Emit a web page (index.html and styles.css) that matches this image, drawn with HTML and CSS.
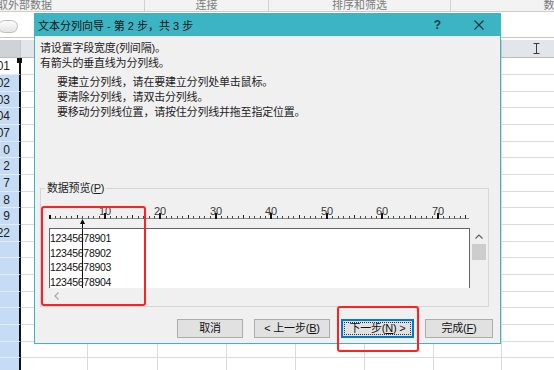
FILE: index.html
```html
<!DOCTYPE html>
<html lang="zh-CN">
<head>
<meta charset="utf-8">
<title>文本分列向导</title>
<link rel="stylesheet" href="styles.css">
</head>
<body>
<div class="app">
  <div class="ribbon-groups">
    <div class="rg rg-1">获取外部数据</div>
    <div class="rg rg-2">连接</div>
    <div class="rg rg-3">排序和筛选</div>
    <div class="rg rg-4">数据工具</div>
  </div>
  <div class="formula-bar"><span class="namebox"></span></div>
  <div class="sheet">
    <div class="row head">
      <span class="c"></span><span class="c"></span><span class="c"></span><span class="c"></span><span class="c"></span><span class="c"></span><span class="c"></span><span class="c"></span><span class="c ibeam-cell"><svg class="ibeam" width="7" height="11" viewBox="0 0 7 11"><path d="M0.5 0.5h6M3.5 0.5v10M0.5 10.5h6" stroke="#3a3a3a" fill="none"/></svg></span>
    </div>
    <div class="rows">
      <div class="row"><span class="c a active">01</span><span class="c"></span><span class="c"></span><span class="c"></span><span class="c"></span><span class="c"></span><span class="c"></span><span class="c"></span><span class="c"></span></div>
      <div class="row"><span class="c a">02</span><span class="c"></span><span class="c"></span><span class="c"></span><span class="c"></span><span class="c"></span><span class="c"></span><span class="c"></span><span class="c"></span></div>
      <div class="row"><span class="c a">03</span><span class="c"></span><span class="c"></span><span class="c"></span><span class="c"></span><span class="c"></span><span class="c"></span><span class="c"></span><span class="c"></span></div>
      <div class="row"><span class="c a">04</span><span class="c"></span><span class="c"></span><span class="c"></span><span class="c"></span><span class="c"></span><span class="c"></span><span class="c"></span><span class="c"></span></div>
      <div class="row"><span class="c a">07</span><span class="c"></span><span class="c"></span><span class="c"></span><span class="c"></span><span class="c"></span><span class="c"></span><span class="c"></span><span class="c"></span></div>
      <div class="row"><span class="c a">0</span><span class="c"></span><span class="c"></span><span class="c"></span><span class="c"></span><span class="c"></span><span class="c"></span><span class="c"></span><span class="c"></span></div>
      <div class="row"><span class="c a">2</span><span class="c"></span><span class="c"></span><span class="c"></span><span class="c"></span><span class="c"></span><span class="c"></span><span class="c"></span><span class="c"></span></div>
      <div class="row"><span class="c a">7</span><span class="c"></span><span class="c"></span><span class="c"></span><span class="c"></span><span class="c"></span><span class="c"></span><span class="c"></span><span class="c"></span></div>
      <div class="row"><span class="c a">8</span><span class="c"></span><span class="c"></span><span class="c"></span><span class="c"></span><span class="c"></span><span class="c"></span><span class="c"></span><span class="c"></span></div>
      <div class="row"><span class="c a">9</span><span class="c"></span><span class="c"></span><span class="c"></span><span class="c"></span><span class="c"></span><span class="c"></span><span class="c"></span><span class="c"></span></div>
      <div class="row"><span class="c a">22</span><span class="c"></span><span class="c"></span><span class="c"></span><span class="c"></span><span class="c"></span><span class="c"></span><span class="c"></span><span class="c"></span></div>
      <div class="row"><span class="c a"></span><span class="c"></span><span class="c"></span><span class="c"></span><span class="c"></span><span class="c"></span><span class="c"></span><span class="c"></span><span class="c"></span></div>
      <div class="row"><span class="c a"></span><span class="c"></span><span class="c"></span><span class="c"></span><span class="c"></span><span class="c"></span><span class="c"></span><span class="c"></span><span class="c"></span></div>
      <div class="row"><span class="c a"></span><span class="c"></span><span class="c"></span><span class="c"></span><span class="c"></span><span class="c"></span><span class="c"></span><span class="c"></span><span class="c"></span></div>
      <div class="row"><span class="c a"></span><span class="c"></span><span class="c"></span><span class="c"></span><span class="c"></span><span class="c"></span><span class="c"></span><span class="c"></span><span class="c"></span></div>
      <div class="row"><span class="c a"></span><span class="c"></span><span class="c"></span><span class="c"></span><span class="c"></span><span class="c"></span><span class="c"></span><span class="c"></span><span class="c"></span></div>
      <div class="row"><span class="c a"></span><span class="c"></span><span class="c"></span><span class="c"></span><span class="c"></span><span class="c"></span><span class="c"></span><span class="c"></span><span class="c"></span></div>
      <div class="row"><span class="c a"></span><span class="c"></span><span class="c"></span><span class="c"></span><span class="c"></span><span class="c"></span><span class="c"></span><span class="c"></span><span class="c"></span></div>
      <div class="row"><span class="c a"></span><span class="c"></span><span class="c"></span><span class="c"></span><span class="c"></span><span class="c"></span><span class="c"></span><span class="c"></span><span class="c"></span></div>
    </div>
  </div>

  <div class="dialog">
    <div class="titlebar">
      <span class="title">文本分列向导 - 第 2 步，共 3 步</span>
      <span class="help">?</span>
      <svg class="close" width="10" height="10" viewBox="0 0 10 10"><path d="M0.5 0.5L9.5 9.5M9.5 0.5L0.5 9.5" stroke="#1b3a40" stroke-width="1.2" fill="none"/></svg>
    </div>
    <div class="dlg-body">
      <p class="intro">请设置字段宽度(列间隔)。<br>有箭头的垂直线为分列线。</p>
      <p class="hints">要建立分列线，请在要建立分列处单击鼠标。<br>要清除分列线，请双击分列线。<br>要移动分列线位置，请按住分列线并拖至指定位置。</p>
      <div class="group">
        <div class="group-label">数据预览(<u>P</u>)</div>
        <div class="preview">
          <svg class="ruler" width="421" height="28" viewBox="0 0 421 28">
            <path d="M0 18.5H420" stroke="#8a8a8a" fill="none"/>
            <path d="M6.5 16v2.5M11.5 16v2.5M17.5 16v2.5M22.5 16v2.5M33.5 16v2.5M39.5 16v2.5M44.5 16v2.5M50.5 16v2.5M61.5 16v2.5M67.5 16v2.5M72.5 16v2.5M78.5 16v2.5M89.5 16v2.5M94.5 16v2.5M100.5 16v2.5M105.5 16v2.5M117.5 16v2.5M122.5 16v2.5M128.5 16v2.5M133.5 16v2.5M144.5 16v2.5M150.5 16v2.5M155.5 16v2.5M161.5 16v2.5M172.5 16v2.5M178.5 16v2.5M183.5 16v2.5M189.5 16v2.5M200.5 16v2.5M205.5 16v2.5M211.5 16v2.5M216.5 16v2.5M228.5 16v2.5M233.5 16v2.5M239.5 16v2.5M244.5 16v2.5M255.5 16v2.5M261.5 16v2.5M266.5 16v2.5M272.5 16v2.5M283.5 16v2.5M289.5 16v2.5M294.5 16v2.5M300.5 16v2.5M311.5 16v2.5M316.5 16v2.5M322.5 16v2.5M327.5 16v2.5M339.5 16v2.5M344.5 16v2.5M350.5 16v2.5M355.5 16v2.5M366.5 16v2.5M372.5 16v2.5M377.5 16v2.5M383.5 16v2.5M394.5 16v2.5M400.5 16v2.5M405.5 16v2.5M411.5 16v2.5" stroke="#444" fill="none"/>
            <path d="M28.5 15v3.5M83.5 15v3.5M139.5 15v3.5M194.5 15v3.5M250.5 15v3.5M305.5 15v3.5M361.5 15v3.5M416.5 15v3.5" stroke="#222" fill="none"/>
            <g fill="#111">
              <rect x="0" y="15" width="2" height="4"/>
              <rect x="55" y="13" width="2" height="6"/>
              <rect x="110" y="13" width="2" height="6"/>
              <rect x="166" y="13" width="2" height="6"/>
              <rect x="221" y="13" width="2" height="6"/>
              <rect x="277" y="13" width="2" height="6"/>
              <rect x="332" y="13" width="2" height="6"/>
              <rect x="388" y="13" width="2" height="6"/>
            </g>
            <text x="56" y="15">10</text>
            <text x="111" y="15">20</text>
            <text x="167" y="15">30</text>
            <text x="222" y="15">40</text>
            <text x="278" y="15">50</text>
            <text x="333" y="15">60</text>
            <text x="389" y="15">70</text>
            <path d="M33.5 19L31 24H36Z" fill="#000"/>
            <path d="M33.5 24V28" stroke="#000" fill="none"/>
          </svg>
          <div class="data">
            <span class="split"></span>
            <div>12345678901</div>
            <div>12345678902</div>
            <div>12345678903</div>
            <div>12345678904</div>
          </div>
          <div class="vscroll">
            <svg width="8" height="5" viewBox="0 0 8 5"><path d="M0.5 4.5L4 1L7.5 4.5" stroke="#606060" stroke-width="1.2" fill="none"/></svg>
            <span class="thumb"></span>
          </div>
          <div class="hscroll">
            <svg width="5" height="8" viewBox="0 0 5 8"><path d="M4.5 0.5L1 4L4.5 7.5" stroke="#a8a8a8" stroke-width="1.2" fill="none"/></svg>
          </div>
        </div>
      </div>
      <div class="buttons">
        <span class="btn btn-cancel">取消</span>
        <span class="btn btn-back">&lt; 上一步(<u>B</u>)</span>
        <span class="btn btn-next"><span class="focus">下一步(<u>N</u>) &gt;</span></span>
        <span class="btn btn-finish">完成(<u>F</u>)</span>
      </div>
    </div>
  </div>

  <div class="mark mark-preview"></div>
  <div class="mark mark-next"></div>
</div>
</body>
</html>
```

FILE: styles.css
```css
* { box-sizing: border-box; }
html, body { margin: 0; padding: 0; }
body {
  width: 554px;
  height: 370px;
  overflow: hidden;
  background: #fff;
  font-family: "Liberation Sans", "Noto Sans CJK SC", sans-serif;
  color: #1e1e1e;
}
.app { position: relative; width: 554px; height: 370px; overflow: hidden; }

/* ribbon group labels */
.ribbon-groups {
  display: flex;
  height: 12px;
  margin-left: -106px;
  background: #f3f3f3;
  border-bottom: 1px solid #cdcdcd;
}
.rg {
  flex: none;
  height: 11px;
  line-height: 10px;
  font-size: 11px;
  color: #7b7b7b;
  text-align: center;
  white-space: nowrap;
  overflow: hidden;
  border-right: 1px solid #d2d2d2;
}
.rg-1 { width: 251px; }
.rg-2 { width: 124px; }
.rg-3 { width: 182px; }
.rg-4 { width: 230px; }

/* formula bar */
.formula-bar {
  height: 26px;
  border-bottom: 1px solid #c6c6c6;
  padding-top: 8px;
}
.namebox {
  display: block;
  width: 20px;
  height: 13px;
  margin-left: -2px;
  border: 1px solid #bdbdbd;
  border-radius: 7px;
  background: linear-gradient(#fbfbfb, #e4e4e4);
}

/* sheet grid */
.sheet { padding-top: 2px; }
.row { display: flex; height: 17px; }
.rows .row:nth-child(3n) { height: 16px; }
.c {
  flex: none;
  width: 69px;
  height: 100%;
  border-right: 1px solid #dadada;
  border-bottom: 1px solid #dadada;
}
.row > .c:nth-child(1) { width: 21px; }
.row > .c:nth-child(2) { width: 67px; }
.row > .c:nth-child(3) { width: 70px; }
.row > .c:nth-child(8) { width: 68px; }

.head { height: 18px; }
.head .c {
  background: #e2e5e9;
  border-right-color: #c4c6c9;
  border-bottom-color: #b9bbbe;
}
.head .c:first-child { background: #cfd2d6; }
.ibeam-cell { display: flex; align-items: center; padding-left: 31px; }
.ibeam { display: block; }

.a {
  display: flex;
  justify-content: flex-end;
  align-items: center;
  padding-right: 9px;
  background: #c5dcf4;
  border-right: 2px solid #111;
  border-bottom-color: #e2ecf8;
  font-size: 12px;
  color: #222;
  white-space: nowrap;
}
.a.active { background: #fff; position: relative; }
.a.active::after {
  content: "";
  position: absolute;
  right: -3px;
  top: 0;
  width: 5px;
  height: 5px;
  background: #111;
}

/* dialog window */
.dialog {
  position: absolute;
  left: 34px;
  top: 13px;
  width: 467px;
  height: 331px;
  border: 1px solid #3cb4c3;
  background: #f0f0f0;
  font-size: 11px;
  letter-spacing: -0.2px;
}
.titlebar {
  display: flex;
  align-items: center;
  height: 22px;
  background: #3cb4c3;
  padding: 0 16px 0 3px;
}
.title { flex: 1; font-size: 11px; color: #141414; letter-spacing: 0; }
.help { font-size: 12px; font-weight: bold; color: #1b3a40; margin-right: 33px; }
.close { display: block; }

.dlg-body { padding: 5px 5px 0 5px; }
.intro { margin: 0; line-height: 15px; }
.hints { margin: 4px 0 0 17px; line-height: 15px; }

.group {
  margin: 68px 6px 0 0;
  border: 1px solid #d6d6d6;
  padding: 0 1px 3px 8px;
}
.group-label {
  display: table;
  margin: -8px 0 0 -4px;
  padding: 0 2px;
  background: #f0f0f0;
  line-height: 15px;
}

.preview {
  display: grid;
  grid-template-columns: 421px 16px;
  grid-template-rows: 28px 60px 15px;
  column-gap: 1px;
  margin-top: 4px;
}
.ruler { grid-column: 1; grid-row: 1; display: block; }
.ruler text {
  font: 11px "Liberation Sans", sans-serif;
  fill: #3a3a3a;
  text-anchor: middle;
}
.data {
  grid-column: 1;
  grid-row: 2;
  position: relative;
  background: #fff;
  border: 1px solid #646464;
  border-bottom: 0;
  padding-top: 2px;
  font-family: "Liberation Sans", sans-serif;
  font-size: 10.5px;
  letter-spacing: -0.28px;
  line-height: 14.6px;
  color: #111;
  overflow: hidden;
}
.split {
  position: absolute;
  left: 32px;
  top: 0;
  bottom: 0;
  width: 1px;
  background: #111;
}
.vscroll {
  grid-column: 2;
  grid-row: 2;
  display: flex;
  flex-direction: column;
  align-items: center;
  padding-top: 6px;
  background: #f0f0f0;
}
.vscroll svg { display: block; }
.thumb {
  display: block;
  width: 14px;
  height: 16px;
  margin-top: 5px;
  background: #cdcdcd;
}
.hscroll {
  grid-column: 1;
  grid-row: 3;
  display: flex;
  align-items: center;
  padding-left: 5px;
  background: #f0f0f0;
}

.buttons {
  display: flex;
  justify-content: flex-end;
  gap: 11px;
  margin-top: 12px;
  padding-right: 2px;
}
.btn {
  display: block;
  height: 19px;
  border: 1px solid #adadad;
  background: #e1e1e1;
  line-height: 17px;
  text-align: center;
  color: #111;
  white-space: nowrap;
}
.btn-cancel { width: 66px; }
.btn-back { width: 76px; }
.btn-next { width: 73px; border: 2px solid #0078d7; padding: 1px; }
.btn-finish { width: 68px; }
.focus {
  display: block;
  height: 100%;
  border: 1px dotted #333;
  line-height: 11px;
}

/* red annotation frames */
.mark {
  position: absolute;
  border: 2px solid #ff2121;
  border-radius: 3px;
}
.mark-preview { left: 41px; top: 206px; width: 105px; height: 100px; }
.mark-next { left: 337px; top: 306px; width: 82px; height: 46px; }
```
